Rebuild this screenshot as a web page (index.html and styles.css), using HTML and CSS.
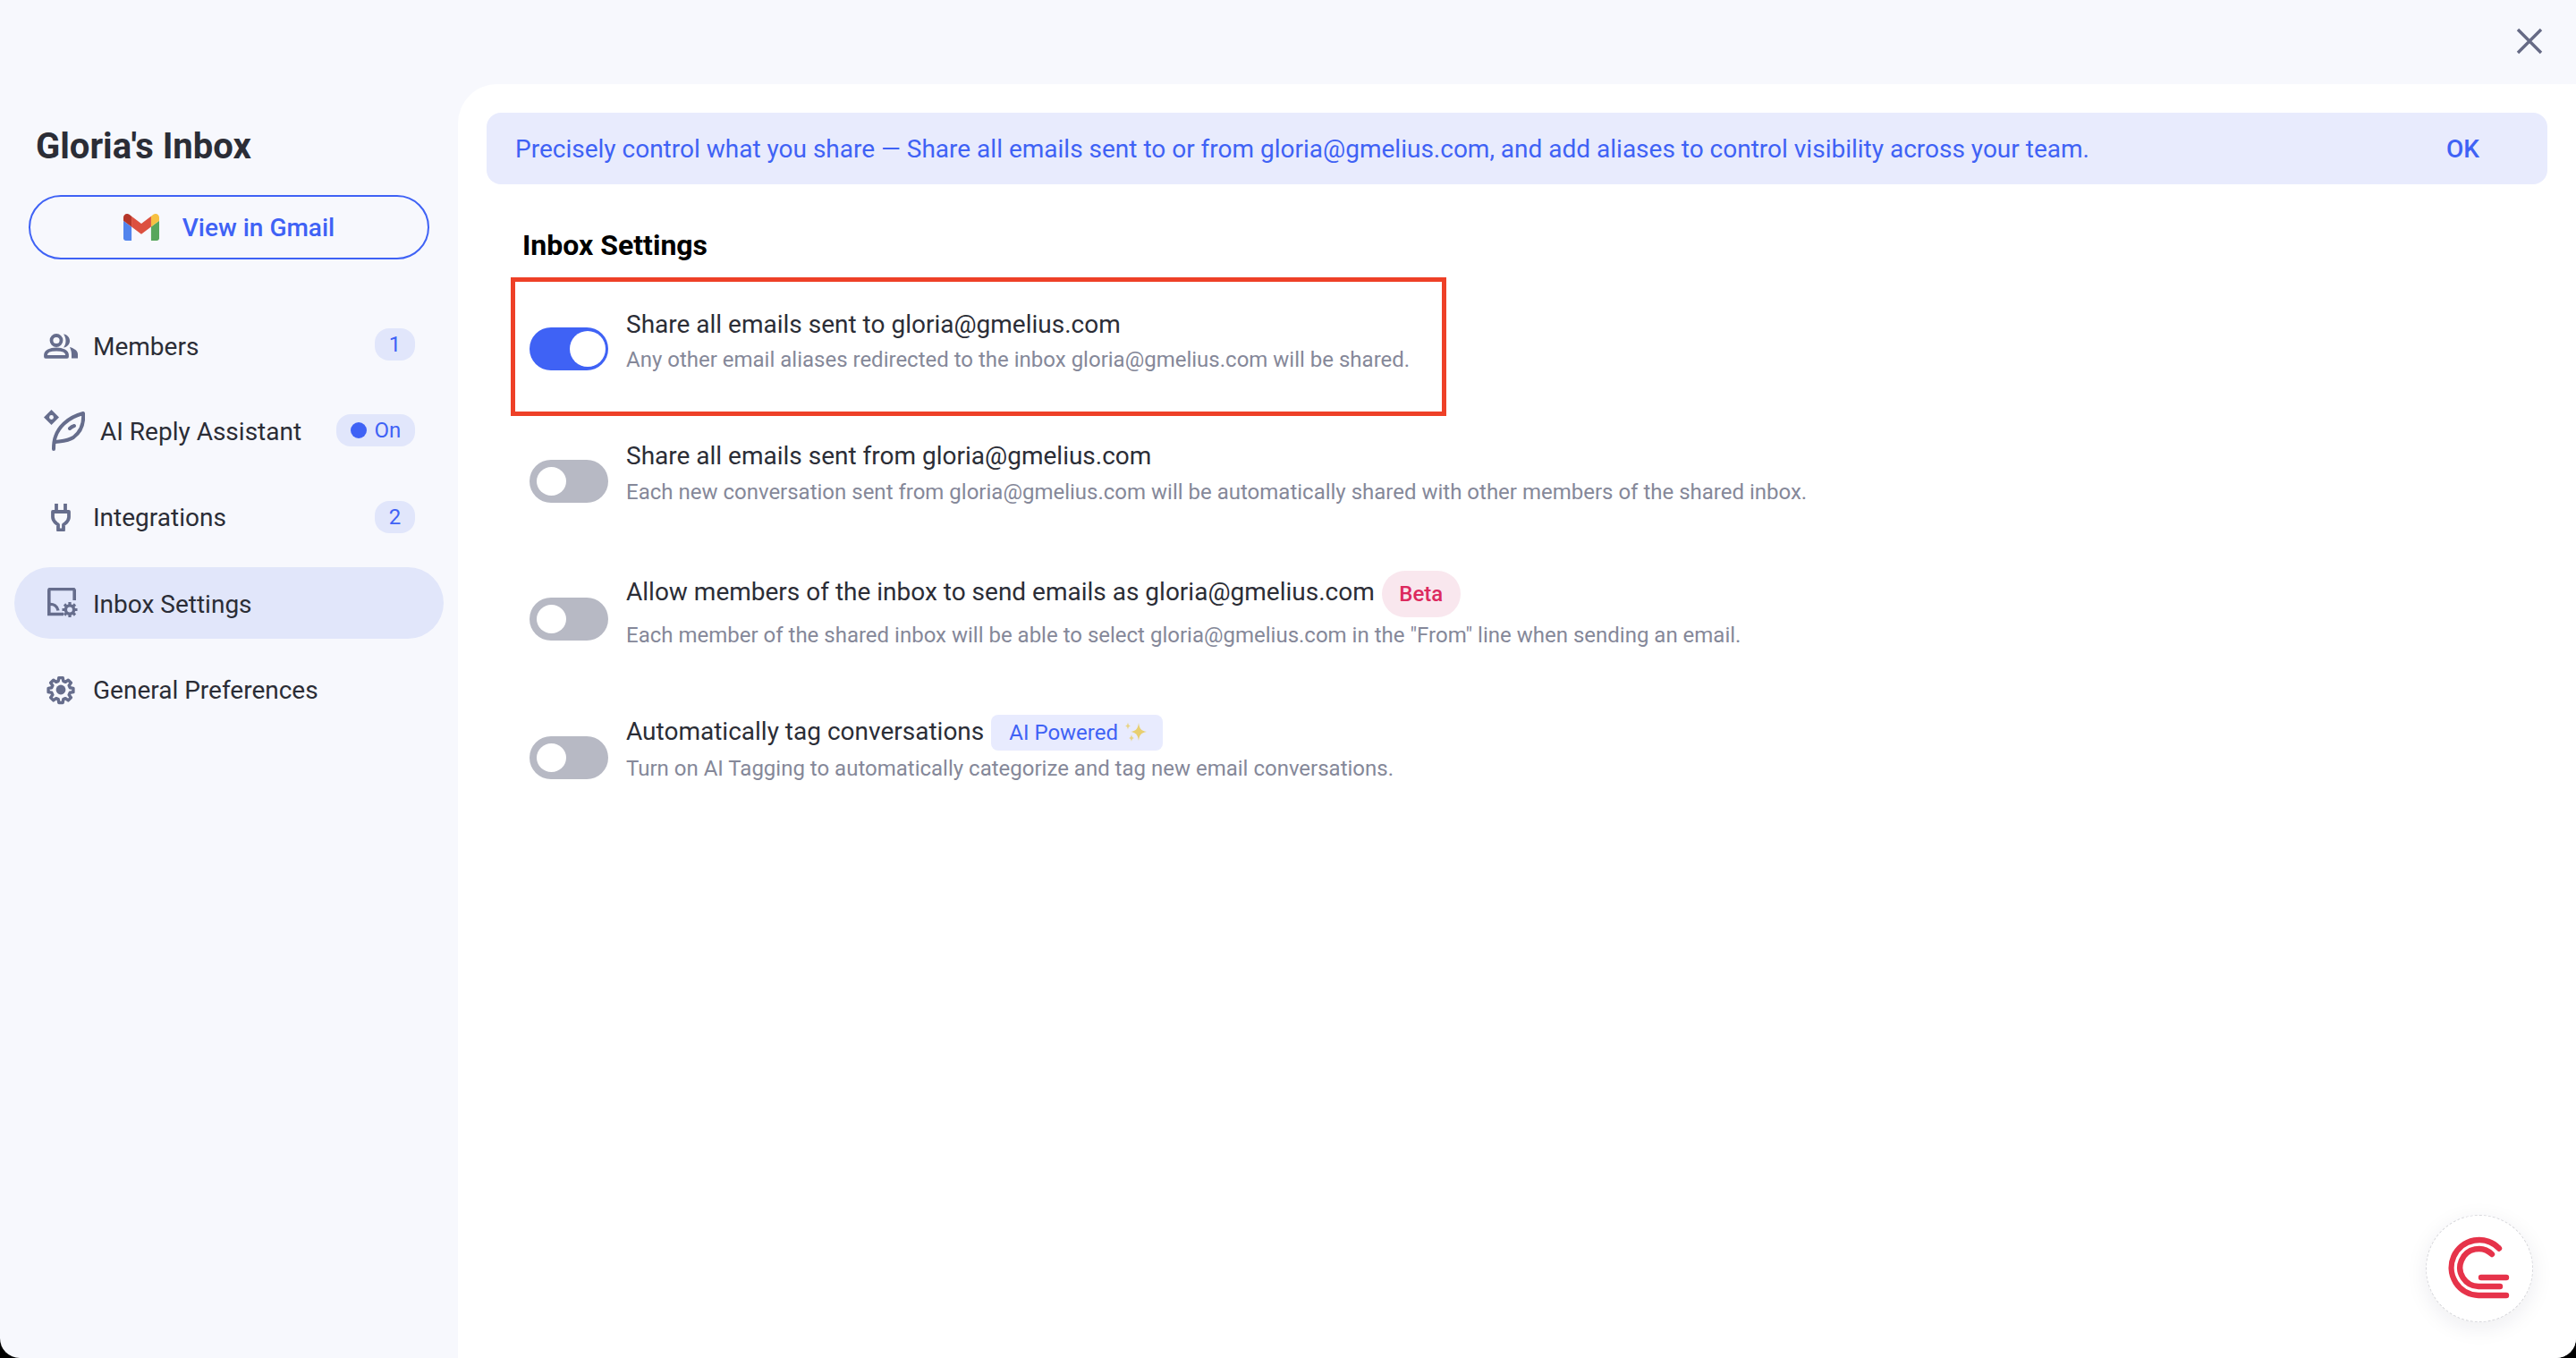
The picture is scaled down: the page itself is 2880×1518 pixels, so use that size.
FILE: index.html
```html
<!DOCTYPE html>
<html lang="en">
<head>
<meta charset="utf-8">
<title>Gloria's Inbox</title>
<link rel="stylesheet" href="styles.css">
</head>
<body>
<div class="app">
  <aside class="sidebar">
    <h1 class="inbox-title">Gloria's Inbox</h1>
    <a class="gmail-btn">
      <svg class="gmail-icon" viewBox="52 42 88 66"><path fill="#5284ed" d="M58 108h14V74L52 59v43c0 3.32 2.69 6 6 6"/><path fill="#58a65c" d="M120 108h14c3.32 0 6-2.69 6-6V59l-20 15"/><path fill="#f6c042" d="M120 48v26l20-15v-8c0-7.42-8.47-11.65-14.4-7.2"/><path fill="#dc5040" d="M72 74V48l24 18 24-18v26L96 92"/><path fill="#b53629" d="M52 51v8l20 15V48l-5.6-4.2c-5.94-4.45-14.4-.22-14.4 7.2"/></svg>
      <span>View in Gmail</span>
    </a>
    <nav class="nav">
      <div class="nav-item">
        <span class="nav-icon"><svg class="icon-members" width="38" height="28" viewBox="0 0 38 28"><circle cx="14" cy="7.500" r="5.500" fill="none" stroke="#666d8c" stroke-width="3.800"/><path d="M2 25.800v-2c0-4 5-6.300 12-6.300s12 2.300 12 6.300v2z" fill="none" stroke="#666d8c" stroke-width="3.800" stroke-linejoin="round"/><path d="M22 .5c4 .5 7 3.500 7 7.500s-3 7-7 7.500c1.500-2 2.500-4.500 2.500-7.500S23.500 2.500 22 .5zM29 15c5 1.500 9 4 9 8v4.500h-7v-4c0-3-.5-5-2-8.500z" fill="#666d8c"/></svg></span>
        <span class="nav-label">Members</span>
        <span class="badge">1</span>
      </div>
      <div class="nav-item">
        <span class="nav-icon"><svg class="icon-feather" width="46" height="46" viewBox="0 0 46 46"><path d="M8.500 0l8.500 8.500-8.500 8.500L0 8.500z" fill="#666d8c"/><circle cx="8.500" cy="8.500" r="2.400" fill="#f7f8fd"/><path d="M11 44c0-6 .5-10 2-14 3-9 12-21 31-26 1 11-3 21-11 27-6 4-13 4-20 5M34 18c-2 .5-3.500 1.500-5 3" fill="none" stroke="#666d8c" stroke-width="4" stroke-linecap="round" stroke-linejoin="round"/></svg></span>
        <span class="nav-label nav-label-wide">AI Reply Assistant</span>
        <span class="badge badge-on"><i class="dot"></i>On</span>
      </div>
      <div class="nav-item">
        <span class="nav-icon"><svg width="22" height="32" viewBox="0 0 22 32"><path d="M6 1v9M16 1v9" stroke="#666d8c" stroke-width="3.800"/><path d="M2 10h18v6c0 3-1.500 5-4 7l-2 1.500v6H8v-6l-2-1.500c-2.500-2-4-4-4-7z" fill="none" stroke="#666d8c" stroke-width="3.800" stroke-linejoin="round"/></svg></span>
        <span class="nav-label">Integrations</span>
        <span class="badge">2</span>
      </div>
      <div class="nav-item nav-item-active">
        <span class="nav-icon"><svg class="icon-inbox" width="34" height="34" viewBox="0 0 34 34"><path d="M18 29.500H1.800V3A1.500 1.500 0 0 1 3.300 1.500h25.400A1.500 1.500 0 0 1 30.200 3v11" fill="none" stroke="#666d8c" stroke-width="3.600"/><path d="M2 18.500c5-.5 9 2 10 7" fill="none" stroke="#666d8c" stroke-width="3.400"/><circle cx="25" cy="24.500" r="4.600" fill="none" stroke="#666d8c" stroke-width="3.400"/><path d="M25 16v17M16.500 24.500h17M19 18.500l12 12M31 18.500l-12 12" stroke="#666d8c" stroke-width="3.200" stroke-dasharray="3 11"/></svg></span>
        <span class="nav-label">Inbox Settings</span>
      </div>
      <div class="nav-item">
        <span class="nav-icon"><svg width="34" height="34" viewBox="0 0 24 24"><path d="M10.300 1.500h3.400l.5 2.900 1.900.8 2.400-1.700 2.400 2.400-1.700 2.400.8 1.900 2.900.5v3.400l-2.900.5-.8 1.900 1.700 2.400-2.400 2.400-2.400-1.700-1.900.8-.5 2.900h-3.400l-.5-2.900-1.900-.8-2.400 1.700-2.400-2.400 1.700-2.400-.8-1.900-2.900-.5v-3.400l2.900-.5.8-1.900-1.700-2.400 2.400-2.400 2.400 1.700 1.900-.8z" transform="translate(12 12) scale(.9) translate(-12 -12)" fill="none" stroke="#666d8c" stroke-width="2.700" stroke-linejoin="round"/><circle cx="12" cy="12" r="3.800" fill="#666d8c"/></svg></span>
        <span class="nav-label">General Preferences</span>
      </div>
    </nav>
  </aside>
  <div class="right">
    <header class="topbar">
      <svg class="close" width="30" height="30" viewBox="0 0 30 30"><path d="M2 2l26 26M28 2 2 28" stroke="#666a85" stroke-width="3.400"/></svg>
    </header>
    <main class="main">
      <div class="banner">
        <span>Precisely control what you share — Share all emails sent to or from gloria@gmelius.com, and add aliases to control visibility across your team.</span>
        <b class="ok">OK</b>
      </div>
      <section class="settings">
        <h2 class="settings-title">Inbox Settings</h2>
        <div class="setting setting-first">
          <span class="toggle toggle-on"><i class="knob"></i></span>
          <div class="setting-text">
            <div class="setting-name">Share all emails sent to gloria@gmelius.com</div>
            <div class="setting-desc">Any other email aliases redirected to the inbox gloria@gmelius.com will be shared.</div>
          </div>
          <span class="highlight"></span>
        </div>
        <div class="setting setting-second">
          <span class="toggle"><i class="knob"></i></span>
          <div class="setting-text">
            <div class="setting-name">Share all emails sent from gloria@gmelius.com</div>
            <div class="setting-desc">Each new conversation sent from gloria@gmelius.com will be automatically shared with other members of the shared inbox.</div>
          </div>
        </div>
        <div class="setting setting-third">
          <span class="toggle"><i class="knob"></i></span>
          <div class="setting-text">
            <div class="setting-name setting-name-beta">Allow members of the inbox to send emails as gloria@gmelius.com <span class="chip-beta">Beta</span></div>
            <div class="setting-desc">Each member of the shared inbox will be able to select gloria@gmelius.com in the "From" line when sending an email.</div>
          </div>
        </div>
        <div class="setting setting-fourth">
          <span class="toggle"><i class="knob"></i></span>
          <div class="setting-text">
            <div class="setting-name setting-name-ai">Automatically tag conversations <span class="chip-ai">AI Powered
              <svg width="26" height="26" viewBox="0 0 26 26"><path d="M17 2c.8 6 2.500 9 9 10-6.500 1-8.200 4-9 10-.8-6-2.500-9-9-10 6.500-1 8.200-4 9-10z" fill="#e8cf70"/><path d="M5 1.500c.4 2.500 1 3.400 3 4-2 .6-2.600 1.500-3 4-.4-2.500-1-3.400-3-4 2-.6 2.600-1.500 3-4z" fill="#e8d488"/><path d="M9 15c.4 2.500 1 3.400 3 4-2 .6-2.600 1.500-3 4-.4-2.500-1-3.400-3-4 2-.6 2.600-1.500 3-4z" fill="#e8d488"/></svg></span></div>
            <div class="setting-desc">Turn on AI Tagging to automatically categorize and tag new email conversations.</div>
          </div>
        </div>
      </section>
      <div class="fab">
        <svg width="72" height="72" viewBox="0 0 72 72" fill="none" stroke="#e6334a" stroke-width="6.400" stroke-linecap="round"><path d="M58 13.500A31 31 0 1 0 35 66h31"/><path d="M50 20A21 21 0 1 0 35 56h24"/><path d="M38 46h28"/></svg>
      </div>
    </main>
  </div>
</div>
</body>
</html>
```

FILE: styles.css
```css
* { box-sizing: border-box; }
html, body { margin: 0; height: 100%; background: #000; }
body { font-family: Roboto, "Liberation Sans", sans-serif; color: #2b2d36; overflow: hidden; }
.app { display: flex; height: 1518px; background: #f7f8fd; border-radius: 0 0 22px 22px; overflow: hidden; }

.sidebar { width: 512px; flex: none; padding-top: 137px; }
.inbox-title { margin: 0 0 27px 40px; font-size: 40px; line-height: 54px; font-weight: 700; color: #2b2d36; }
.gmail-btn { display: flex; align-items: center; justify-content: center; gap: 26px; width: 448px; height: 72px; margin-left: 32px; border: 2px solid #3f62f5; border-radius: 36px; color: #3f62f5; font-size: 28px; font-weight: 500; }
.gmail-icon { width: 40px; height: 30px; }
.nav { display: flex; flex-direction: column; margin-top: 55px; margin-left: 16px; width: 480px; gap: 16.4px; }
.nav-item { display: flex; align-items: center; height: 80px; padding: 0 32px 0 0; border-radius: 40px; font-size: 28px; line-height: 36px; color: #2b2d36; }
.nav-item-active { background: #e1e6fa; }
.nav-icon { width: 88px; flex: none; display: flex; justify-content: center; padding-left: 16px; }
.icon-members { margin-top: 3px; }
.icon-feather { margin-left: 8px; }
.icon-inbox { margin-left: 3px; }
.nav-label { flex: 1; padding-top: 3px; }
.nav-item:first-child .nav-label { padding-top: 5px; }
.nav-label-wide { padding-left: 8px; }
.badge { display: flex; align-items: center; justify-content: center; gap: 9px; min-width: 45px; height: 36px; border-radius: 16px; background: #e1e6fb; color: #3f62f5; font-size: 24px; }
.badge-on { width: 88px; }
.dot { width: 18px; height: 18px; border-radius: 50%; background: #3f62f5; }

.right { flex: 1; display: flex; flex-direction: column; min-width: 0; }
.topbar { height: 94px; flex: none; position: relative; }
.close { position: absolute; right: 37px; top: 31px; }
.main { flex: 1; position: relative; background: #fff; border-radius: 44px 0 0 0; padding: 32px 32px 0; }
.banner { display: flex; align-items: center; justify-content: space-between; height: 80px; padding: 0 76px 0 32px; border-radius: 16px; background: #e8ebfd; color: #3f62f5; font-size: 28px; }
.ok { font-weight: 500; }

.settings { padding: 46px 0 0 40px; }
.settings-title { margin: 0; font-size: 32px; line-height: 44px; font-weight: 700; color: #000; }
.setting { position: relative; display: flex; align-items: flex-start; gap: 20px; padding-left: 8px; }
.setting-first { margin-top: 46px; }
.setting-second { margin-top: 71px; }
.setting-third { margin-top: 72px; }
.setting-fourth { margin-top: 73px; }
.setting-name { font-size: 28px; line-height: 42px; color: #2b2d36; }
.setting-desc { font-size: 24px; line-height: 32px; margin-top: 2px; color: #858899; }
.setting-second .setting-desc { margin-top: 3px; }
.setting-name-beta { display: flex; align-items: flex-start; gap: 8px; line-height: 48px; }
.setting-name-ai { display: flex; align-items: flex-start; gap: 8px; line-height: 38px; }
.setting-name-beta + .setting-desc, .setting-name-ai + .setting-desc { margin-top: 4px; }
.toggle { position: relative; flex: none; width: 88px; height: 48px; margin-top: 24px; border-radius: 24px; background: #b7b9c4; }
.setting-second .toggle { margin-top: 25px; }
.setting-third .toggle { margin-top: 30px; }
.knob { position: absolute; left: 8px; top: 8px; width: 33px; height: 32px; border-radius: 50%; background: #fff; }
.toggle-on { background: #3f62f5; }
.toggle-on .knob { left: 45px; top: 4px; width: 40px; height: 40px; }
.highlight { position: absolute; left: -13px; top: -32px; width: 1046px; height: 155px; border: 5px solid #ee4027; pointer-events: none; }
.chip-beta { display: flex; align-items: center; justify-content: center; width: 88px; height: 52px; border-radius: 26px; background: #f9e7ee; color: #dc2a5e; font-size: 24px; font-weight: 500; }
.chip-ai { display: flex; align-items: center; gap: 6px; height: 40px; padding: 0 18px 0 20px; border-radius: 8px; background: #e8ebfe; color: #3f62f5; font-size: 24px; line-height: 40px; }
.fab { position: absolute; right: 48px; bottom: 40px; width: 120px; height: 120px; display: flex; align-items: center; justify-content: center; border-radius: 50%; background: #fff; border: 1px dashed #d8d8dc; box-shadow: 0 6px 24px rgba(30, 30, 60, .08); }
```
